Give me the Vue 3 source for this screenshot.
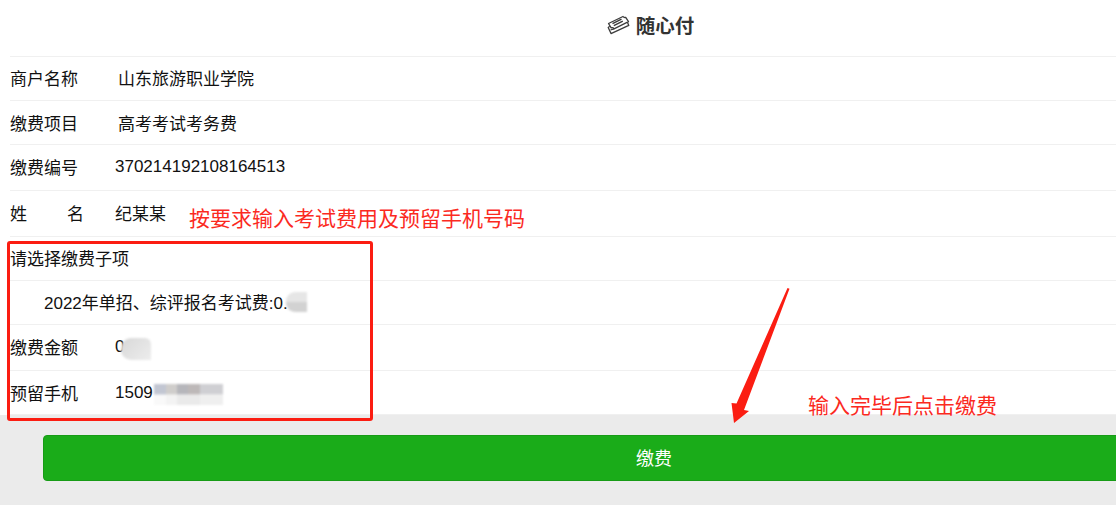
<template>
  <div class="page">
    <header class="title-bar">
      <svg class="ticket-icon" width="23" height="20" viewBox="0 0 23 20" fill="none" stroke="#3c3c3c" stroke-width="1.3" stroke-linejoin="round">
        <path d="M1.500 8.500 16 1.500c.6.9 1.600 1.200 2.700.9l2.800 4.300L7 13.800c-.6-1-1.700-1.300-2.800-.9z" />
        <path d="M5.500 8.600 14.500 4.200M6.800 10.600l9-4.400" stroke-width="1.500" />
        <path d="M2.600 11.200c-.5.7-.9 1.100-1.400 1.300L4 18.600 21.800 10.400l-1.300-3" />
        <path d="M3.500 15 7 13.800" />
      </svg>
      <span class="title">随心付</span>
    </header>

    <div
      v-for="row in rows"
      :key="row.label || row.value"
      class="row"
      :class="{ low: row.low }"
      :style="{ height: row.height + 'px' }"
    >
      <span v-if="row.label" class="label" :class="{ spaced: row.spaced }">
        <template v-if="row.spaced"><i>姓</i><i>名</i></template>
        <template v-else>{{ row.label }}</template>
      </span>
      <span v-if="row.value" class="value" :class="row.kind">{{ row.value }}</span>
    </div>

    <footer class="footer">
      <button class="pay-btn">缴费</button>
    </footer>

    <!-- marks drawn on top of the screenshot -->
    <div class="red-box"></div>
    <div class="note note-top">按要求输入考试费用及预留手机号码</div>
    <div class="note note-bottom">输入完毕后点击缴费</div>
    <svg class="arrow" width="60" height="136" viewBox="0 0 60 136">
      <path d="M56.500 0 58.500 .8 13 122 18 123 3 135 .5 115 5.500 115.500z" fill="#fb1d12" />
    </svg>

    <div class="smudge s1"></div>
    <div class="smudge s2"></div>
    <div class="smudge s3"></div>
  </div>
</template>

<script setup>
const rows = [
  { label: '商户名称', value: '山东旅游职业学院', kind: 'name', height: 44 },
  { label: '缴费项目', value: '高考考试考务费', kind: 'name', height: 44, low: true },
  { label: '缴费编号', value: '370214192108164513', height: 46 },
  { label: '姓名', value: '纪某某', spaced: true, height: 46 },
  { label: '请选择缴费子项', height: 44 },
  { value: '2022年单招、综评报名考试费:0.', kind: 'sub', height: 44 },
  { label: '缴费金额', value: '0', height: 46 },
  { label: '预留手机', value: '1509', height: 44, low: true }
]
</script>

<style>
html,
body {
  margin: 0;
  background: #fff;
  overflow: hidden;
}
</style>

<style scoped>
.page {
  position: relative;
  width: 1116px;
  height: 505px;
  overflow: hidden;
  background: #fff;
  color: #111;
  font-family: "Liberation Sans", "Noto Sans CJK SC", sans-serif;
  font-size: 17px;
}

.title-bar {
  display: flex;
  align-items: center;
  justify-content: center;
  gap: 6px;
  box-sizing: border-box;
  height: 57px;
  margin-left: 10px;
  padding: 0 12px 7px 187px;
  border-bottom: 1px solid #f0f0f0;
}

.title {
  font-size: 19.5px;
  font-weight: 700;
  color: #333;
}

.row {
  display: flex;
  align-items: center;
  box-sizing: border-box;
  margin-left: 10px;
  padding-bottom: 2px;
  border-bottom: 1px solid #f0f0f0;
}

.row.low {
  padding-bottom: 0;
}

.label {
  width: 105px;
  flex: none;
  white-space: nowrap;
}

.label.spaced {
  display: flex;
  justify-content: space-between;
  width: 74px;
  margin-right: 31px;
}

.label i {
  font-style: normal;
}

.value.name {
  margin-left: 3px;
}

.value.sub {
  margin-left: 34px;
}

.footer {
  box-sizing: border-box;
  height: 90px;
  padding: 20px 0 0 43px;
  background: #ebebeb;
}

.pay-btn {
  display: block;
  width: 1220px;
  height: 46px;
  padding: 0 0 2px;
  border: 1px solid #179b16;
  border-radius: 4px;
  background: #1aac19;
  color: #fff;
  font: inherit;
  font-size: 18px;
  text-align: left;
  text-indent: 592px;
}

.red-box {
  position: absolute;
  left: 7px;
  top: 241px;
  width: 360px;
  height: 174px;
  border: 3px solid #fb1d12;
  border-radius: 3px;
}

.note {
  position: absolute;
  color: #fb2a1f;
  font-size: 21px;
  line-height: 26px;
  white-space: nowrap;
}

.note-top {
  left: 189px;
  top: 206px;
}

.note-bottom {
  left: 808px;
  top: 393px;
}

.arrow {
  position: absolute;
  left: 731px;
  top: 288px;
}

.smudge {
  position: absolute;
  filter: blur(1px);
}

.s1 {
  left: 286px;
  top: 292px;
  width: 21px;
  height: 20px;
  border-radius: 9px 0 0 9px;
  background: linear-gradient(#e6e6e6 50%, #d2d2d2 50%);
}

.s2 {
  left: 121px;
  top: 338px;
  width: 30px;
  height: 22px;
  border-radius: 10px 6px 0 10px;
  background: linear-gradient(135deg, #d8d8d8, #ededed);
}

.s3 {
  left: 154px;
  top: 384px;
  width: 69px;
  height: 21px;
  background:
    linear-gradient(90deg, #c2c6d2 0 17%, #cfcdcb 17% 34%, #b6b6bb 34% 50%, #bdb8b8 50% 66%, #cfcfd3 66% 100%) top / 100% 50% no-repeat,
    linear-gradient(90deg, #f9f9f9 0 17%, #f3f3f3 17% 34%, #eaeaea 34% 66%, #efefef 66% 100%) bottom / 100% 50% no-repeat;
}
</style>
